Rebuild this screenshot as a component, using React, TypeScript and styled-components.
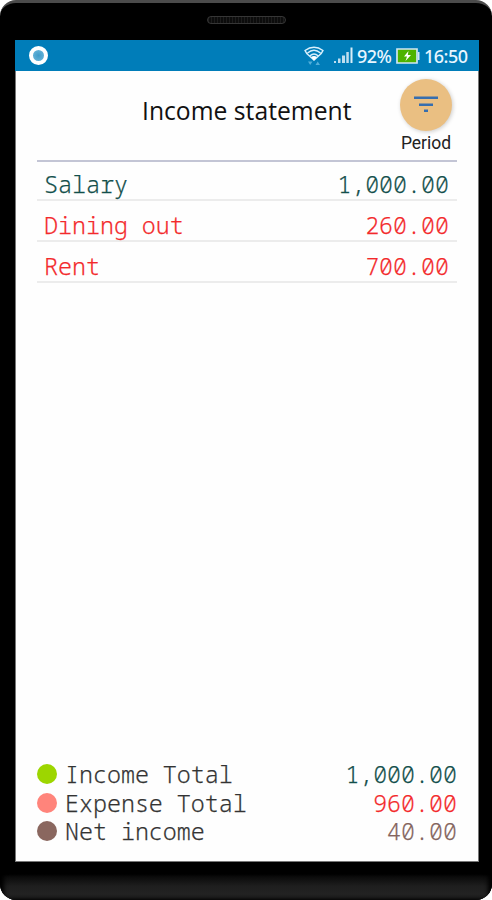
import React from 'react';
import styled, { createGlobalStyle } from 'styled-components';

const GlobalStyle = createGlobalStyle`
  * { box-sizing: border-box; }
  body { margin: 0; background: #fff; font-family: "Noto Sans", sans-serif; }
`;

const Phone = styled.div`
  width: 492px;
  height: 900px;
  display: flex;
  flex-direction: column;
  background: #000;
  border-top: 3px solid #4b4b4b;
  border-radius: 16px;
  overflow: hidden;
`;

const TopBezel = styled.div`
  height: 37px;
  flex: none;
  display: flex;
  justify-content: center;
  padding-top: 13px;
`;

const Speaker = styled.div`
  width: 79px;
  height: 8px;
  border: 1px solid #363636;
  border-radius: 4px;
  background: repeating-linear-gradient(90deg, #1c1c1c 0 1px, #0c0c0c 1px 3px);
`;

const Screen = styled.main`
  width: 464px;
  height: 822px;
  flex: none;
  margin-left: 15px;
  display: flex;
  flex-direction: column;
  background: #fefefe;
  border: solid #777;
  border-width: 0 1px 1px;
`;

const BottomBezel = styled.div`
  flex: 1;
  background: linear-gradient(#000 0 12px, #0b0b0b 15px, #1e1e1e 24px, #222 32px, #1e1e1e 100%);
  box-shadow: inset 4px 0 4px #000, inset -4px 0 4px #000;
`;

const StatusBar = styled.header`
  height: 31px;
  flex: none;
  margin: 0 -1px;
  padding: 0 12px 0 14px;
  display: flex;
  align-items: center;
  background: #007db9;
  color: #e8f6ff;
`;

const AppDot = styled.div`
  width: 19px;
  height: 19px;
  margin-right: auto;
  border: 4px solid #fff;
  border-radius: 50%;
  background: radial-gradient(#3f9bc9, #70b9dc);
`;

const StatusText = styled.span<{ $width: number }>`
  width: ${(p) => p.$width}px;
  font-size: 18px;
  line-height: 30px;
  font-weight: 500;
  white-space: nowrap;
  letter-spacing: -0.5px;
`;

const Heading = styled.div`
  height: 91px;
  flex: none;
  margin: 0 21px;
  display: grid;
  grid-template-columns: 1fr 62px;
  border-bottom: 2px solid #c3c5d5;
`;

const Title = styled.h1`
  margin: 0;
  padding: 20px 0 0 105px;
  font: 400 24.7px/40px "Open Sans", sans-serif;
  color: #111;
  white-space: nowrap;
`;

const PeriodButton = styled.button`
  border: 0;
  padding: 8px 0 0;
  background: none;
  display: flex;
  flex-direction: column;
  align-items: center;
  font: 17.5px/24px Roboto, sans-serif;
  color: #222;
`;

const Disc = styled.span`
  width: 52px;
  height: 52px;
  flex: none;
  border-radius: 50%;
  background: #eabf82;
  box-shadow: 1px 1px 4px #0003;
  display: flex;
  align-items: center;
  justify-content: center;
`;

const PeriodLabel = styled.span`
  flex: none;
`;

const Rows = styled.section`
  margin: 0 21px;
`;

const Row = styled.div<{ $height: number }>`
  height: ${(p) => p.$height}px;
  padding: 0 8px 1px 7px;
  display: flex;
  justify-content: space-between;
  align-items: flex-end;
  border-bottom: 2px solid #ececec;
`;

const Summary = styled.footer`
  margin: auto 21px 16px;
`;

const SummaryRow = styled.div`
  height: 28.3px;
  display: flex;
  align-items: center;
`;

const Dot = styled.i<{ $color: string }>`
  width: 20px;
  height: 20px;
  margin-right: 8px;
  border-radius: 50%;
  background: ${(p) => p.$color};
`;

const Label = styled.span<{ $color: string }>`
  font: 300 23.3px/28px "Noto Sans Mono", monospace;
  -webkit-text-stroke: 0.25px;
  color: ${(p) => p.$color};
  white-space: pre;
`;

const Figures = styled(Label)`
  margin-left: auto;
`;

function Amount({ value, color }: { value: string; color: string }) {
  return <Figures $color={color}>{value}</Figures>;
}

const WifiIcon = () => (
  <svg width="20" height="22" viewBox="0 0 20 22" fill="none" stroke="#d9f0fc" strokeWidth="1.4">
    <path d="M1 5.500Q10-1 19 5.500Q18 8.500 14 11.500L10 15L6 11.500Q2 8.500 1 5.500ZM3.500 8Q10 2.500 16.500 8M6 10.800Q10 7 14 10.800" />
    <path d="M7 12Q10 10 13 12L10 15.500Z" fill="#fff" stroke="none" />
    <path d="M4 16.500H8.500L6.200 20ZM11.500 20H16L13.700 16.500Z" fill="#51aeda" stroke="none" />
  </svg>
);

const SignalIcon = () => (
  <svg width="19" height="17" viewBox="0 0 19 17" fill="#bfdeef">
    <path d="M0 14h2v2H0zM4 11.500h2.500v4.500H4zM8 8.500h3v7.500H8zM12.300 5h2.500v11h-2.500z" />
    <path d="M16.500 0.500h2v15.500h-2z" fill="#d8edf8" />
  </svg>
);

const BatteryIcon = () => (
  <svg width="24" height="16" viewBox="0 0 24 16">
    <path d="M1 1H21V15H1Z" fill="#4eb300" stroke="#cfe6f3" strokeWidth="1.700" />
    <path d="M22 4h1.500v8H22z" fill="#cfe6f3" />
    <path d="M12.500 3L8 8.500H11L9.500 13L15 7H11.800Z" fill="#fff" />
  </svg>
);

const StatusIcon = styled.span<{ $gap: number }>`
  display: flex;
  margin-right: ${(p) => p.$gap}px;
`;

const FilterIcon = () => (
  <svg width="26" height="18" viewBox="0 0 26 18" fill="#376eae">
    <path d="M1 0.500h24v2.500H1zM6 7.500h14v2.500H6zM11 13.500h4v2.500h-4z" />
  </svg>
);

const entries = [
  { name: 'Salary', amount: '1,000.00', color: '#124f4b', height: 39 },
  { name: 'Dining out', amount: '260.00', color: '#f3292b', height: 41 },
  { name: 'Rent', amount: '700.00', color: '#f3292b', height: 41 },
];

const totals = [
  { name: 'Income Total', amount: '1,000.00', color: '#124f4b', dot: '#9dd600' },
  { name: 'Expense Total', amount: '960.00', color: '#f3292b', dot: '#ff847b' },
  { name: 'Net income', amount: '40.00', color: '#84645d', dot: '#8a675f' },
];

export default function App() {
  return (
    <>
      <GlobalStyle />
      <Phone>
        <TopBezel><Speaker /></TopBezel>
        <Screen>
          <StatusBar>
            <AppDot />
            <StatusIcon $gap={10}><WifiIcon /></StatusIcon>
            <StatusIcon $gap={4}><SignalIcon /></StatusIcon>
            <StatusText $width={39}>92%</StatusText>
            <StatusIcon $gap={4}><BatteryIcon /></StatusIcon>
            <StatusText $width={43}>16:50</StatusText>
          </StatusBar>
          <Heading>
            <Title>Income statement</Title>
            <PeriodButton>
              <Disc><FilterIcon /></Disc>
              <PeriodLabel>Period</PeriodLabel>
            </PeriodButton>
          </Heading>
          <Rows>
            {entries.map((e) => (
              <Row key={e.name} $height={e.height}>
                <Label $color={e.color}>{e.name}</Label>
                <Amount value={e.amount} color={e.color} />
              </Row>
            ))}
          </Rows>
          <Summary>
            {totals.map((t) => (
              <SummaryRow key={t.name}>
                <Dot $color={t.dot} />
                <Label $color="#333">{t.name}</Label>
                <Amount value={t.amount} color={t.color} />
              </SummaryRow>
            ))}
          </Summary>
        </Screen>
        <BottomBezel />
      </Phone>
    </>
  );
}
